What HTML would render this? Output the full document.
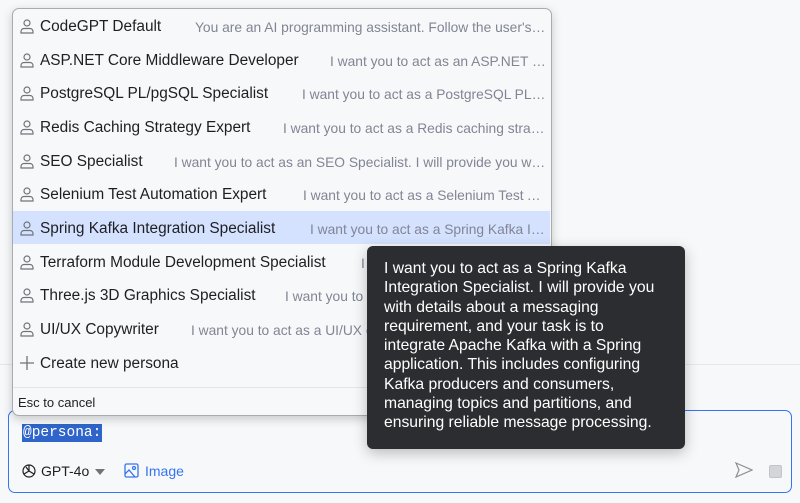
<!DOCTYPE html>
<html><head><style>
*{margin:0;padding:0;box-sizing:border-box}
body{width:800px;height:503px;background:#f7f8fa;font-family:"Liberation Sans",sans-serif;position:relative;overflow:hidden}
.hr{position:absolute;left:0;right:0;top:364px;height:1px;background:#e6e7ea}
.pop{position:absolute;left:12px;top:8px;width:540px;height:408px;background:#f7f8fa;border:1px solid #a8abb0;border-radius:7px;box-shadow:0 3px 10px rgba(0,0,0,.2);overflow:hidden}
.row{position:absolute;left:0;width:537px;height:33px;display:flex;align-items:center;white-space:nowrap;overflow:hidden}
.row.sel{background:#d4e2ff}
.row svg{position:absolute;left:6px;top:9px}
.t{position:absolute;left:27px;font-size:15.4px;color:#1e1f22;top:9px}
.d{font-size:13.8px;color:#818594;overflow:hidden;text-overflow:ellipsis;position:absolute;right:2px;top:11px}
.esc{position:absolute;left:5px;top:386px;font-size:13px;color:#1e1f22}
.div{position:absolute;left:0;right:0;top:378px;height:1px;background:#e4e5e8}
.inp{position:absolute;left:8px;top:410px;width:784px;height:83px;border:1.5px solid #3574f0;border-radius:7px;background:#f7f8fa}
.sel-text{position:absolute;left:13px;top:13px;background:#2f65ca;color:#fff;font-family:"Liberation Mono",monospace;font-size:14.5px;padding:0 1px;line-height:18px}
.tip{position:absolute;left:367px;top:246px;width:318px;height:203px;background:#2b2d30;border-radius:6px;box-shadow:0 4px 14px rgba(0,0,0,.25);color:#fff;font-size:15.7px;line-height:19.3px;padding:13px 0 0 17px;white-space:nowrap}
</style></head><body>
<div class="hr"></div>
<div class="inp">
<div class="sel-text">@persona:</div>
<svg style="position:absolute;left:12px;top:52px" width="16" height="16" viewBox="0 0 16 16" fill="none" stroke="#1e1f22" stroke-width="1.2"><circle cx="8" cy="8" r="6"/><path d="M8 2v6l5 3M8 8l-5 3M5 4l3 4"/></svg>
<div style="position:absolute;left:32px;top:52px;font-size:14px;color:#1e1f22">GPT-4o</div>
<div style="position:absolute;left:86px;top:58px;width:0;height:0;border-left:5px solid transparent;border-right:5px solid transparent;border-top:6px solid #6f737a"></div>
<svg style="position:absolute;left:115px;top:52px" width="15" height="15" viewBox="0 0 15 15" fill="none" stroke="#3574f0" stroke-width="1.3"><rect x="1" y="1" width="13" height="13" rx="1.5"/><circle cx="10" cy="5" r="1.5"/><path d="M1 11l4-4 6 7"/></svg>
<div style="position:absolute;left:136px;top:52px;font-size:14px;color:#3574f0">Image</div>
<svg style="position:absolute;left:726px;top:51px" width="18" height="16" viewBox="0 0 18 16" fill="none" stroke="#8c8f94" stroke-width="1.2"><path d="M1 1l16 7-16 7 3-7z"/></svg>
<div style="position:absolute;left:760px;top:54px;width:13px;height:13px;background:#d3d5d9;border:1px solid #c2c4c8;border-radius:2px"></div>
</div>
<div class="pop">
<div class="row" style="top:0"><svg width="16" height="16" viewBox="0 0 16 16" fill="none" stroke="#6f737a" stroke-width="1.2"><circle cx="8" cy="5" r="3"/><path d="M2 15v-1.5a3 3 0 0 1 3-3h6a3 3 0 0 1 3 3V15z"/></svg><span class="t">CodeGPT Default</span><span class="d" style="left:182px">You are an AI programming assistant. Follow the user's requirements</span></div>
<div class="row" style="top:34px"><svg width="16" height="16" viewBox="0 0 16 16" fill="none" stroke="#6f737a" stroke-width="1.2"><circle cx="8" cy="5" r="3"/><path d="M2 15v-1.5a3 3 0 0 1 3-3h6a3 3 0 0 1 3 3V15z"/></svg><span class="t">ASP.NET Core Middleware Developer</span><span class="d" style="left:317px">I want you to act as an ASP.NET Core middleware</span></div>
<div class="row" style="top:67px"><svg width="16" height="16" viewBox="0 0 16 16" fill="none" stroke="#6f737a" stroke-width="1.2"><circle cx="8" cy="5" r="3"/><path d="M2 15v-1.5a3 3 0 0 1 3-3h6a3 3 0 0 1 3 3V15z"/></svg><span class="t">PostgreSQL PL/pgSQL Specialist</span><span class="d" style="left:289px">I want you to act as a PostgreSQL PL/pgSQL expert</span></div>
<div class="row" style="top:101px"><svg width="16" height="16" viewBox="0 0 16 16" fill="none" stroke="#6f737a" stroke-width="1.2"><circle cx="8" cy="5" r="3"/><path d="M2 15v-1.5a3 3 0 0 1 3-3h6a3 3 0 0 1 3 3V15z"/></svg><span class="t">Redis Caching Strategy Expert</span><span class="d" style="left:270px">I want you to act as a Redis caching strategy expert</span></div>
<div class="row" style="top:135px"><svg width="16" height="16" viewBox="0 0 16 16" fill="none" stroke="#6f737a" stroke-width="1.2"><circle cx="8" cy="5" r="3"/><path d="M2 15v-1.5a3 3 0 0 1 3-3h6a3 3 0 0 1 3 3V15z"/></svg><span class="t">SEO Specialist</span><span class="d" style="left:161px">I want you to act as an SEO Specialist. I will provide you with details</span></div>
<div class="row" style="top:168px"><svg width="16" height="16" viewBox="0 0 16 16" fill="none" stroke="#6f737a" stroke-width="1.2"><circle cx="8" cy="5" r="3"/><path d="M2 15v-1.5a3 3 0 0 1 3-3h6a3 3 0 0 1 3 3V15z"/></svg><span class="t">Selenium Test Automation Expert</span><span class="d" style="left:290px">I want you to act as a Selenium Test Automation</span></div>
<div class="row sel" style="top:202px"><svg width="16" height="16" viewBox="0 0 16 16" fill="none" stroke="#6f737a" stroke-width="1.2"><circle cx="8" cy="5" r="3"/><path d="M2 15v-1.5a3 3 0 0 1 3-3h6a3 3 0 0 1 3 3V15z"/></svg><span class="t">Spring Kafka Integration Specialist</span><span class="d" style="left:297px">I want you to act as a Spring Kafka Integration</span></div>
<div class="row" style="top:236px"><svg width="16" height="16" viewBox="0 0 16 16" fill="none" stroke="#6f737a" stroke-width="1.2"><circle cx="8" cy="5" r="3"/><path d="M2 15v-1.5a3 3 0 0 1 3-3h6a3 3 0 0 1 3 3V15z"/></svg><span class="t">Terraform Module Development Specialist</span><span class="d" style="left:348px">I want you to act</span></div>
<div class="row" style="top:269px"><svg width="16" height="16" viewBox="0 0 16 16" fill="none" stroke="#6f737a" stroke-width="1.2"><circle cx="8" cy="5" r="3"/><path d="M2 15v-1.5a3 3 0 0 1 3-3h6a3 3 0 0 1 3 3V15z"/></svg><span class="t">Three.js 3D Graphics Specialist</span><span class="d" style="left:272px">I want you to act as a Three.js</span></div>
<div class="row" style="top:303px"><svg width="16" height="16" viewBox="0 0 16 16" fill="none" stroke="#6f737a" stroke-width="1.2"><circle cx="8" cy="5" r="3"/><path d="M2 15v-1.5a3 3 0 0 1 3-3h6a3 3 0 0 1 3 3V15z"/></svg><span class="t">UI/UX Copywriter</span><span class="d" style="left:178px">I want you to act as a UI/UX copywriter</span></div>
<div class="row" style="top:337px"><svg width="16" height="16" viewBox="0 0 16 16" fill="none" stroke="#6f737a" stroke-width="1.3"><path d="M8 1v14M1 8h14"/></svg><span class="t">Create new persona</span></div>
<div class="div"></div>
<div class="esc">Esc to cancel</div>
</div>
<div class="tip">I want you to act as a Spring Kafka<br>Integration Specialist. I will provide you<br>with details about a messaging<br>requirement, and your task is to<br>integrate Apache Kafka with a Spring<br>application. This includes configuring<br>Kafka producers and consumers,<br>managing topics and partitions, and<br>ensuring reliable message processing.</div>
</body></html>
